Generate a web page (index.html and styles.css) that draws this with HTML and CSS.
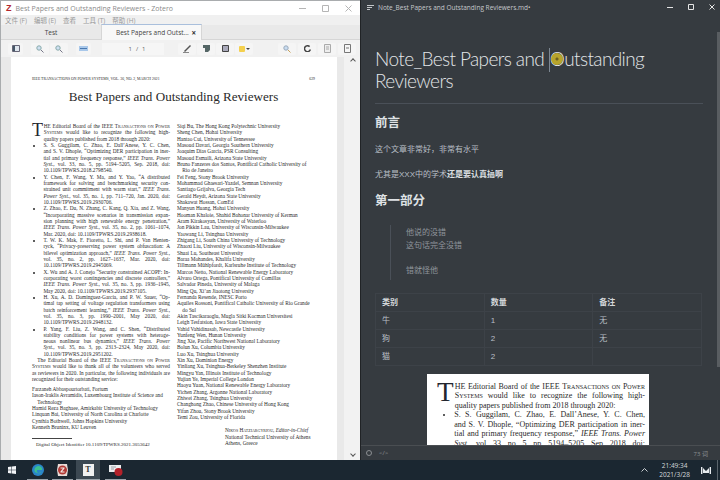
FILE: index.html
```html
<!DOCTYPE html>
<html lang="en">
<head>
  <meta charset="UTF-8">
  <title>Zotero and Typora</title>
  <link rel="stylesheet" href="styles.css">
</head>
<body>
  <div class="desktop">

    <!-- Zotero window -->
    <section class="zotero">
      <div class="z-title">
        <span class="z-logo">Z</span>
        <span class="z-name">Best Papers and Outstanding Reviewers - Zotero</span>
        <span class="z-controls">
          <svg width="7" height="7" viewBox="0 0 7 7"><path d="M0 3.5h7" stroke="#b5b5b5"/></svg>
          <svg width="7" height="7" viewBox="0 0 7 7"><path d="M.5.5h6v6h-6z" fill="none" stroke="#b5b5b5"/></svg>
          <svg width="7" height="7" viewBox="0 0 7 7"><path d="M.5.5l6 6M6.5.5l-6 6" stroke="#b5b5b5"/></svg>
        </span>
      </div>
      <div class="z-menu">
        <span>文件 (F)</span><span>编辑 (E)</span><span>查看</span><span>工具 (T)</span><span>帮助 (H)</span>
      </div>
      <div class="z-tabs">
        <div class="tab">Test</div>
        <div class="tab tab-on"><span>Best Papers and Outst...</span><b>×</b></div>
      </div>
      <div class="z-tools">
        <span class="tool"><svg width="8" height="7" viewBox="0 0 8 7"><path d="M.5.5h7v6h-7z" fill="#dfe6ee" stroke="#667"/><path d="M1 1h2v5H1z" fill="#456"/></svg></span>
        <span class="tool-group">
          <span class="tool"><svg width="8" height="8" viewBox="0 0 8 8"><circle cx="3" cy="3" r="2.2" fill="#cfe0f2" stroke="#8aa"/><path d="M5 5l2.5 2.5" stroke="#778"/></svg></span>
          <span class="tool"><svg width="8" height="8" viewBox="0 0 8 8"><circle cx="3" cy="3" r="2.2" fill="#cfe0f2" stroke="#8aa"/><path d="M5 5l2.5 2.5" stroke="#778"/></svg></span>
        </span>
        <span class="tool"><svg width="9" height="5" viewBox="0 0 9 5"><path d="M0 0h9v5H0z" fill="#a9c8ea"/><path d="M1 2.5h7" stroke="#4a79b0"/></svg></span>
        <span class="page-box"><span>1</span><span>/</span><span>1</span></span>
        <span class="tool-group marks">
          <span class="tool"><svg width="9" height="9" viewBox="0 0 9 9"><path d="M1 7L7 1l1 1-6 6z" fill="#555"/><path d="M0 8.5h6" stroke="#888"/></svg></span>
          <span class="tool"><svg width="7" height="7" viewBox="0 0 7 7"><path d="M0 0h7v5L5 7H2V3H0z" fill="#566"/></svg></span>
          <span class="tool"><svg width="7" height="7" viewBox="0 0 7 7"><path d="M.5.5h6v6h-6z" fill="#aab" stroke="#444"/></svg></span>
          <span class="tool"><i class="swatch"></i><i class="caret"></i></span>
        </span>
        <span class="tool-group ends">
          <span class="tool"><svg width="8" height="8" viewBox="0 0 8 8"><circle cx="3" cy="3" r="2.2" fill="#c9dcf1" stroke="#9ab"/><path d="M5 5l2.5 2.5" stroke="#c9a15a"/></svg></span>
          <span class="tool"><svg width="7" height="7" viewBox="0 0 7 7"><path d="M5.6 1.6A3 3 0 1 0 6.400 4.500" fill="none" stroke="#444" stroke-width="1.500"/></svg></span>
          <span class="tool"><svg width="7" height="9" viewBox="0 0 7 9"><path d="M.5.5h6v8h-6z" fill="#eee" stroke="#aaa"/><path d="M2 3h3M2 5h3" stroke="#aaa"/></svg></span>
          <span class="tool"><svg width="7" height="9" viewBox="0 0 7 9"><path d="M.5.5h6v8h-6z" fill="#f6f6f6" stroke="#777"/><path d="M2 4h3" stroke="#777"/></svg></span>
        </span>
      </div>
      <div class="z-view">
        <article class="pdf-page">
          <div class="running"><span>IEEE TRANSACTIONS ON POWER SYSTEMS, VOL. 36, NO. 2, MARCH 2021</span><span>629</span></div>
          <h1 class="pdf-title">Best Papers and Outstanding Reviewers</h1>
          <div class="pdf-cols">
            <div class="paper">
              <p class="just"><span class="drop">T</span>HE Editorial Board of the IEEE <span class="sc">Transactions on Power</span><br><span class="sc">Systems</span> would like to recognize the following high-<span class="tail">quality papers published from 2018 through 2020:</span></p>
              <ul>
                <li class="just">S. S. Guggilam, C. Zhao, E. Dall’Anese, Y. C. Chen,<br>and S. V. Dhople, “Optimizing DER participation in iner-<br>tial and primary frequency response,” <em>IEEE Trans. Power</em><br><em>Syst.</em>, vol. 33, no. 5, pp. 5194–5205, Sep. 2018, doi:<span class="tail">10.1109/TPWRS.2018.2798540.</span></li>
                <li class="just">Y. Chen, F. Wang, Y. Ma, and Y. Yao, “A distributed<br>framework for solving and benchmarking security con-<br>strained unit commitment with warm start,” <em>IEEE Trans.</em><br><em>Power Syst.</em>, vol. 35, no. 1, pp. 711–720, Jan. 2020, doi:<span class="tail">10.1109/TPWRS.2019.2930706.</span></li>
                <li class="just">Z. Zhao, E. Du, N. Zhang, C. Kang, Q. Xia, and Z. Wang,<br>“Incorporating massive scenarios in transmission expan-<br>sion planning with high renewable energy penetration,”<br><em>IEEE Trans. Power Syst.</em>, vol. 35, no. 2, pp. 1061–1074,<span class="tail">Mar. 2020, doi: 10.1109/TPWRS.2019.2938618.</span></li>
                <li class="just">T. W. K. Mak, F. Fioretto, L. Shi, and P. Van Henten-<br>ryck, “Privacy-preserving power system obfuscation: A<br>bilevel optimization approach,” <em>IEEE Trans. Power Syst.</em>,<br>vol. 35, no. 2, pp. 1627–1637, Mar. 2020, doi:<span class="tail">10.1109/TPWRS.2019.2945069.</span></li>
                <li class="just">X. Wu and A. J. Conejo “Security constrained ACOPF: In-<br>corporating worst contingencies and discrete controllers,”<br><em>IEEE Trans. Power Syst.</em>, vol. 35, no. 3, pp. 1936–1945,<span class="tail">May 2020, doi: 10.1109/TPWRS.2019.2937105.</span></li>
                <li class="just">H. Xu, A. D. Domínguez-García, and P. W. Sauer, “Op-<br>timal tap setting of voltage regulation transformers using<br>batch reinforcement learning,” <em>IEEE Trans. Power Syst.</em>,<br>vol. 35, no. 3, pp. 1990–2001, May 2020, doi:<span class="tail">10.1109/TPWRS.2019.2948132.</span></li>
                <li class="just">P. Yang, F. Liu, Z. Wang, and C. Shen, “Distributed<br>stability conditions for power systems with heteroge-<br>neous nonlinear bus dynamics,” <em>IEEE Trans. Power</em><br><em>Syst.</em>, vol. 35, no. 3, pp. 2313–2324, May 2020, doi:<span class="tail">10.1109/TPWRS.2019.2951202.</span></li>
              </ul>
              <p class="just indent">The Editorial Board of the IEEE <span class="sc">Transactions on Power</span><br><span class="sc">Systems</span> would like to thank all of the volunteers who served<br>as reviewers in 2020. In particular, the following individuals are<span class="tail">recognized for their outstanding service:</span></p>
              <div class="names first">
                <div>Farzaneh Abbaspourtorbati, Fortum</div>
                <div>Iason-Iraklis Avramidis, Luxembourg Institute of Science and Technology</div>
                <div>Hamid Reza Baghaee, Amirkabir University of Technology</div>
                <div>Linquan Bai, University of North Carolina at Charlotte</div>
                <div>Cynthia Bothwell, Johns Hopkins University</div>
                <div>Kenneth Bruninx, KU Leuven</div>
              </div>
              <div class="footnote">Digital Object Identifier 10.1109/TPWRS.2021.3053642</div>
            </div>
            <div class="paper">
              <div class="names">
                <div>Siqi Bu, The Hong Kong Polytechnic University</div>
                <div>Sheng Chen, Hohai University</div>
                <div>Hantao Cui, University of Tennessee</div>
                <div>Masoud Davari, Georgia Southern University</div>
                <div>Joaquim Dias Garcia, PSR Consulting</div>
                <div>Masoud Esmaili, Arizona State University</div>
                <div>Bruno Fanzeres dos Santos, Pontifical Catholic University of Rio de Janeiro</div>
                <div>Fei Feng, Stony Brook University</div>
                <div>Mohammad Ghaesari-Yazdel, Semnan University</div>
                <div>Santiago Grijalva, Georgia Tech</div>
                <div>Gerald Heydt, Arizona State University</div>
                <div>Shakawat Hossan, ComEd</div>
                <div>Manyun Huang, Hohai University</div>
                <div>Hooman Khaloie, Shahid Bahonar University of Kerman</div>
                <div>Aram Kirakosyan, University of Waterloo</div>
                <div>Jon Pikkin Lau, University of Wisconsin-Milwaukee</div>
                <div>Yaowang Li, Tsinghua University</div>
                <div>Zhigang Li, South China University of Technology</div>
                <div>Zhaoxi Liu, University of Wisconsin-Milwaukee</div>
                <div>Shuai Lu, Southeast University</div>
                <div>Baraa Mohandes, Khalifa University</div>
                <div>Tillmann Mühlpfordt, Karlsruhe Institute of Technology</div>
                <div>Marcos Netto, National Renewable Energy Laboratory</div>
                <div>Alvaro Ortega, Pontifical University of Comillas</div>
                <div>Salvador Pineda, University of Malaga</div>
                <div>Ming Qu, Xi’an Jiaotong University</div>
                <div>Fernanda Resende, INESC Porto</div>
                <div>Aquiles Rossoni, Pontifical Catholic University of Rio Grande do Sul</div>
                <div>Akin Tascikaraoglu, Mugla Sitki Kocman Universitesi</div>
                <div>Leigh Tesfatsion, Iowa State University</div>
                <div>Vahid Vahidinasab, Newcastle University</div>
                <div>Yunfeng Wen, Hunan University</div>
                <div>Jing Xie, Pacific Northwest National Laboratory</div>
                <div>Bolun Xu, Columbia University</div>
                <div>Luo Xu, Tsinghua University</div>
                <div>Xin Xu, Dominion Energy</div>
                <div>Yinliang Xu, Tsinghua-Berkeley Shenzhen Institute</div>
                <div>Mingyu Yan, Illinois Institute of Technology</div>
                <div>Yujian Ye, Imperial College London</div>
                <div>Haoyu Yuan, National Renewable Energy Laboratory</div>
                <div>Yichen Zhang, Argonne National Laboratory</div>
                <div>Zhiwei Zhang, Tsinghua University</div>
                <div>Changhong Zhao, Chinese University of Hong Kong</div>
                <div>Yifan Zhou, Stony Brook University</div>
                <div>Temi Zou, University of Florida</div>
              </div>
              <div class="signoff">
                <div><span class="sc">Nikos Hatziargyriou</span>, <em>Editor-in-Chief</em></div>
                <div>National Technical University of Athens</div>
                <div>Athens, Greece</div>
              </div>
            </div>
          </div>
        </article>
        <div class="z-scroll"><i class="up"></i><i class="down"></i></div>
      </div>
    </section>

    <!-- Typora window -->
    <section class="typora">
      <div class="t-title">
        <svg width="7" height="5" viewBox="0 0 7 5"><path d="M0 .5h7M0 2.500h5M0 4.500h3" stroke="#c4c7ca"/></svg>
        <span class="t-name">Note_Best Papers and Outstanding Reviewers.md•</span>
        <span class="t-controls">
          <svg width="6" height="6" viewBox="0 0 6 6"><path d="M0 3.500h6" stroke="#e4e4e4"/></svg>
          <svg width="6" height="6" viewBox="0 0 6 6"><path d="M.5.5h5v5h-5z" fill="none" stroke="#e4e4e4"/></svg>
          <svg width="6" height="6" viewBox="0 0 6 6"><path d="M.5.5l5 5M5.500.5l-5 5" stroke="#e4e4e4"/></svg>
        </span>
      </div>
      <div class="t-doc">
        <h1 class="doc-title">Note_Best Papers and <i class="cursor"></i><span class="hit">O</span>utstanding Reviewers</h1>
        <h2>前言</h2>
        <p>这个文章非常好，非常有水平</p>
        <p>尤其是XXX中的学术<strong>还是要认真搞啊</strong></p>
        <h2>第一部分</h2>
        <blockquote>
          <p>他说的没错<br>这句话完全没错</p>
          <p>错就怪他</p>
        </blockquote>
        <table>
          <thead><tr><th>类别</th><th>数量</th><th>备注</th></tr></thead>
          <tbody>
            <tr><td>牛</td><td>1</td><td>无</td></tr>
            <tr><td>狗</td><td>2</td><td>无</td></tr>
            <tr><td>猫</td><td>2</td><td></td></tr>
          </tbody>
        </table>
        <div class="snippet paper">
          <p class="just"><span class="drop">T</span>HE Editorial Board of the IEEE <span class="sc">Transactions on Power</span><br><span class="sc">Systems</span> would like to recognize the following high-<span class="tail">quality papers published from 2018 through 2020:</span></p>
          <ul>
            <li class="just">S. S. Guggilam, C. Zhao, E. Dall’Anese, Y. C. Chen,<br>and S. V. Dhople, “Optimizing DER participation in iner-<br>tial and primary frequency response,” <em>IEEE Trans. Power</em><br><em>Syst.</em>, vol. 33, no. 5, pp. 5194–5205, Sep. 2018, doi:</li>
          </ul>
        </div>
        <div class="t-scroll"></div>
      </div>
      <div class="t-status">
        <svg width="6" height="6" viewBox="0 0 6 6"><circle cx="3" cy="3" r="2.500" fill="none" stroke="#8b8f93"/></svg>
        <span class="code">&lt;/&gt;</span>
        <span class="count">73 词</span>
      </div>
    </section>
  </div>

  <footer class="taskbar">
    <svg class="win" width="8" height="8" viewBox="0 0 8 8"><path d="M0 1l3.500-.5v3.200H0zM4 .4L8 0v3.700H4zM0 4.200h3.500v3.300L0 7zM4 4.200h4V8l-4-.5z" fill="#f2f4f6"/></svg>
    <span class="task"><svg width="12" height="12" viewBox="0 0 12 12"><circle cx="6" cy="6" r="6" fill="#2a86c8"/><path d="M3 8a4 4 0 0 1 6-5 3 3 0 0 1 1 3H5a2 2 0 0 0 4 2 5 5 0 0 1-6 0z" fill="#3bc18f"/></svg></span>
    <span class="task"><svg width="11" height="12" viewBox="0 0 11 12"><path d="M1 0h9l1 6-1 6H1L0 6z" fill="#e8dcd8"/><circle cx="5.500" cy="6" r="4.500" fill="#b13a36"/><path d="M3.500 3.500h4v1l-2.500 3h2.500v1h-4v-1l2.500-3h-2.500z" fill="#f3e9e6"/></svg></span>
    <span class="task task-on"><span class="t-icon">T</span></span>
    <span class="task"><svg width="14" height="12" viewBox="0 0 14 12"><path d="M0 1h12v7H0z" fill="#eceff1"/><path d="M2 3h5M2 5h3" stroke="#9a9fa5"/><circle cx="9.500" cy="8" r="4" fill="#b3212a"/></svg></span>
    <span class="tray">
      <svg width="7" height="4" viewBox="0 0 7 4"><path d="M.5 3.500l3-3 3 3" fill="none" stroke="#c9ced2"/></svg>
      <span class="clock"><span>21:49:34</span><span>2021/3/28</span></span>
      <svg width="10" height="7" viewBox="0 0 10 7"><path d="M.7 0v7M9.300 0v7" stroke="#e8ecef" stroke-width="1.400"/><path d="M2 1l3 3 3-3v5H2z" fill="#e8ecef"/></svg>
      <i class="show-desk"></i>
    </span>
  </footer>
</body>
</html>
```

FILE: styles.css
```css
* {
  box-sizing: border-box;
}
html, body {
  margin: 0;
  height: 100%;
  overflow: hidden;
}
body {
  width: 720px;
  height: 480px;
  display: flex;
  flex-direction: column;
  font-family: "Open Sans", "Noto Sans CJK SC", sans-serif;
  background-color: #1b2731;
}
.desktop {
  height: 460px;
  display: flex;
  gap: 1px;
  background-color: #202326;
}

/* zotero window */
.zotero {
  width: 360px;
  display: flex;
  flex-direction: column;
  background-color: #f0f0f0;
  border-left: 1px solid #a9acae;
  border-top: 1px solid #a9acae;
}
.z-title {
  height: 14px;
  display: flex;
  align-items: center;
  gap: 4px;
  padding-left: 5px;
  background-color: #fff;
  font-size: 7px;
  color: #8b8b8b;
}
.z-logo {
  font: bold 9px "Liberation Sans", sans-serif;
  color: #b3272d;
}
.z-controls {
  margin-left: auto;
  display: flex;
  gap: 16px;
  padding-right: 8px;
}
.z-menu {
  height: 10px;
  display: flex;
  gap: 7px;
  padding-left: 4px;
  align-items: center;
  font-size: 6.500px;
  color: #999;
}
.z-tabs {
  height: 15px;
  display: flex;
  background-color: #e9e9e9;
  font-size: 6.500px;
  color: #444;
  border-bottom: 1px solid #d6d6d6;
}
.tab {
  width: 100px;
  display: flex;
  align-items: center;
  justify-content: center;
}
.tab-on {
  width: 101px;
  height: 16px;
  margin-top: -1px;
  background-color: #f8f8f8;
  border-top: 1px solid #a9bfdc;
  border-left: 1px solid #d6d6d6;
  border-right: 1px solid #d6d6d6;
  padding-left: 14px;
  justify-content: space-between;
  padding-right: 5px;
}
.tab-on b {
  font-size: 8px;
  color: #333;
}
.z-tools {
  height: 17px;
  display: flex;
  align-items: center;
  padding-left: 7px;
  gap: 8px;
  background-color: #f1f1f1;
}
.tool-group {
  display: flex;
  gap: 1px;
}
.tool {
  width: 15px;
  height: 12px;
  display: flex;
  align-items: center;
  justify-content: center;
  background-color: #f5f5f5;
  border-radius: 2px;
}
.tool-group .tool {
  width: 18px;
}
.page-box {
  width: 62px;
  height: 12px;
  display: flex;
  align-items: center;
  justify-content: center;
  gap: 4px;
  padding-left: 8px;
  margin-left: 3px;
  background-color: #f6f6f6;
  font-size: 6px;
  color: #666;
}
.marks {
  margin-left: 6px;
}
.ends {
  margin-left: 17px;
  gap: 2px;
}
.swatch {
  width: 6px;
  height: 6px;
  background-color: #f4d04e;
  border-radius: 1px;
}
.caret {
  margin-left: 1px;
  border: 2px solid transparent;
  border-top-color: #444;
  border-bottom: none;
}
.z-view {
  flex: 1;
  min-height: 0;
  display: flex;
  padding-left: 10px;
  overflow: hidden;
  background-color: #e9e9e9;
}
.pdf-page {
  width: 326px;
  height: 100%;
  padding: 20px 22px 0 21px;
  background-color: #fff;
  font-family: "Liberation Serif", serif;
  color: #2a2a2a;
}
.z-scroll {
  flex: 1;
  margin-left: 7px;
  position: relative;
  background-color: #f2f2f2;
}
.z-scroll .up, .z-scroll .down {
  position: absolute;
  right: 5px;
  width: 4px;
  height: 4px;
  border-left: 1px solid #555;
  border-top: 1px solid #555;
  transform: rotate(45deg);
}
.z-scroll .up {
  top: 2px;
}
.z-scroll .down {
  bottom: 4px;
  transform: rotate(225deg);
}
.running {
  display: flex;
  justify-content: space-between;
  font-size: 3.800px;
  line-height: 5px;
}
.pdf-title {
  margin: 7px 0 18px;
  font-size: 13.100px;
  line-height: 16px;
  font-weight: 400;
  text-align: center;
}
.pdf-cols {
  display: flex;
  justify-content: space-between;
}
.pdf-cols .paper {
  width: 138px;
}

/* the paper text is set in em so the pasted snippet can reuse it */
.paper {
  font-family: "Liberation Serif", serif;
  font-size: 5.300px;
  line-height: 1.195;
}
.paper p, .paper ul {
  margin: 0;
}
.paper ul {
  padding-left: 2.150em;
}
.just {
  text-align: justify;
  text-align-last: justify;
}
.tail {
  display: block;
  text-align-last: left;
}
.indent {
  text-indent: 1em;
}
.indent .tail {
  text-indent: 0;
}
.sc {
  font-variant: small-caps;
}
.drop {
  float: left;
  font-size: 3.400em;
  line-height: 0.700;
  padding-top: 0.060em;
  padding-right: 0.040em;
  color: #23262e;
}
.names div {
  padding-left: 1em;
  text-indent: -1em;
}
.first {
  margin-top: 3.500px;
}
.footnote {
  margin-top: 8px;
  padding: 3px 0 0 4px;
  width: 40px;
  white-space: nowrap;
  border-top: 1px solid #444;
  font-size: 5px;
  line-height: 6px;
}
.signoff {
  margin: 7px 0 0 48px;
  white-space: nowrap;
}

/* typora window */
.typora {
  flex: 1;
  display: flex;
  flex-direction: column;
  background-color: #363b40;
  color: #b8bfc6;
}
.t-title {
  height: 14px;
  display: flex;
  align-items: center;
  gap: 4px;
  padding-left: 6px;
  font-size: 6.500px;
  color: #c6c9cc;
}
.t-controls {
  margin-left: auto;
  display: flex;
  gap: 15px;
  padding-right: 5px;
}
.t-doc {
  flex: 1;
  min-height: 0;
  position: relative;
  padding: 34px 17px 0 14px;
  overflow: hidden;
  font-family: "Liberation Sans", "Noto Sans CJK SC", sans-serif;
  font-size: 8px;
  line-height: 12px;
}
.doc-title {
  margin: 0;
  padding-bottom: 11px;
  border-bottom: 1px solid #4a5058;
  font-family: "Lato", "Noto Sans CJK SC", sans-serif;
  font-size: 19px;
  font-weight: 300;
  line-height: 22px;
  letter-spacing: -0.600px;
  color: #e3e6e8;
}
.cursor {
  display: inline-block;
  width: 1px;
  height: 24px;
  margin: 0 0 -6px;
  background-color: #7d8792;
}
.hit {
  position: relative;
}
.hit::after {
  content: "";
  position: absolute;
  left: 1px;
  top: 50%;
  width: 12px;
  height: 12px;
  margin-top: -6px;
  border-radius: 50%;
  background: radial-gradient(circle, #6d6220 0 1px, #b7a42c 2px);
}
.t-doc h2 {
  margin: 12px 0 14px;
  font-size: 12.500px;
  line-height: 14px;
  font-weight: 700;
  color: #dfe2e5;
}
.t-doc p {
  margin: 0 0 13px;
}
.t-doc strong {
  color: #dde0e3;
}
.t-doc blockquote {
  margin: 17px 0 13px 15px;
  padding: 1px 0 3px 15px;
  border-left: 1px solid #4a5058;
  line-height: 13px;
  color: #8f959b;
}
.t-doc blockquote p {
  margin-bottom: 12px;
}
.t-doc blockquote p:last-child {
  margin-bottom: 0;
}
table {
  width: 327px;
  table-layout: fixed;
  border-collapse: collapse;
}
th, td {
  height: 18px;
  padding: 0 6px;
  text-align: left;
  border: 1px solid #3d4248;
}
th {
  color: #d5d8db;
  font-weight: 700;
}
.t-doc .snippet {
  width: 222px;
  margin: 8px 0 0 52px;
  padding: 7.500px 4px 0 10px;
  background-color: #fff;
  color: #2a2a2a;
  font-family: "Liberation Serif", serif;
  font-size: 8px;
  line-height: 1.195;
}
.t-doc .snippet p {
  margin: 0;
}
.t-scroll {
  position: absolute;
  top: 18px;
  right: 0;
  width: 3px;
  height: 335px;
  background-color: #595d61;
}
.t-status {
  height: 15px;
  display: flex;
  align-items: center;
  gap: 7px;
  padding: 0 12px 0 5px;
  border-top: 1px solid #4a4e52;
  font-size: 6px;
  color: #8b8f93;
}
.count {
  margin-left: auto;
}

/* windows taskbar */
.taskbar {
  height: 20px;
  display: flex;
  align-items: center;
  background-color: #1b2731;
}
.win {
  margin: 0 9px 0 8px;
}
.task {
  width: 21px;
  height: 20px;
  margin: 0 2px;
  display: flex;
  align-items: center;
  justify-content: center;
  border-bottom: 1px solid #9aa3aa;
}
.task-on {
  width: 24px;
  margin: 0 3px 0 1px;
  background-color: #3c4852;
}
.t-icon {
  width: 11px;
  height: 12px;
  display: flex;
  align-items: center;
  justify-content: center;
  background-color: #f1f1f1;
  font: bold 8px "Liberation Serif", serif;
  color: #333;
}
.tray {
  margin-left: auto;
  display: flex;
  align-items: center;
  gap: 11px;
}
.clock {
  display: flex;
  flex-direction: column;
  align-items: center;
  font-size: 6.500px;
  line-height: 9px;
  color: #d3d8dc;
}
.show-desk {
  width: 1px;
  height: 20px;
  margin: 0 2px 0 -5px;
  background-color: #5a646c;
}
```
